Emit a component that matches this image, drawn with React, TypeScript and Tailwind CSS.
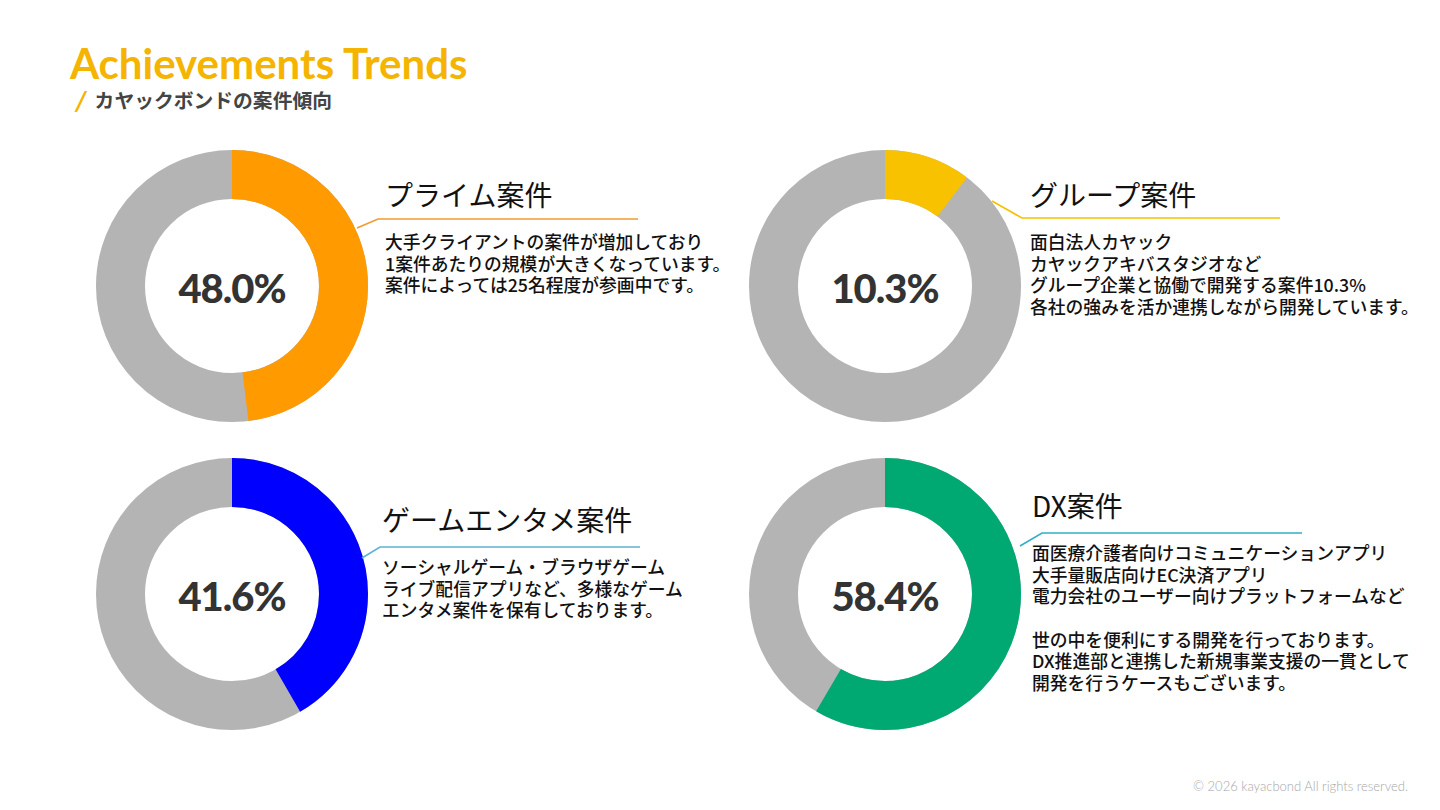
import React from 'react';

interface TrendProps {
  value: number;
  label: string;
  color: string;
  lineColor: string;
  title: string;
  lines: string[];
  textClass: string;
  leader: string;
}

const R = 111.5;
const C = 2 * Math.PI * R;

const Donut: React.FC<{ value: number; color: string; label: string }> = ({ value, color, label }) => (
  <div className="relative w-[272px] h-[272px] shrink-0">
    <svg width="272" height="272" viewBox="0 0 272 272">
      <circle cx="136" cy="136" r={R} fill="none" stroke="#b4b4b4" strokeWidth="49" />
      <circle
        cx="136"
        cy="136"
        r={R}
        fill="none"
        stroke={color}
        strokeWidth="49"
        strokeDasharray={`${(C * value) / 100} ${C}`}
        transform="rotate(-90 136 136)"
      />
    </svg>
    <div className="absolute inset-0 flex items-center justify-center pt-[4px]">
      <span className="font-['Lato',sans-serif] font-black text-[40px] leading-[44px] tracking-[-1px] text-[#333333]">
        {label}
      </span>
    </div>
  </div>
);

const TrendCard: React.FC<TrendProps> = ({ value, label, color, lineColor, title, lines, textClass, leader }) => (
  <div className="relative flex h-[272px]">
    <Donut value={value} color={color} label={label} />
    <div className={`flex flex-col ${textClass}`}>
      <h3 className="text-[28px] leading-[36px] text-[#111111] whitespace-nowrap">{title}</h3>
      <div className="mt-[19px] text-[17.8px] leading-[21.7px] font-medium text-[#111111] whitespace-nowrap">
        {lines.map((line, i) => (
          <p key={i} className="h-[21.7px]">{line}</p>
        ))}
      </div>
    </div>
    {/* leader line from the ring to the caption */}
    <svg className="absolute left-0 top-0 pointer-events-none" width="600" height="272">
      <polyline points={leader} fill="none" stroke={lineColor} strokeWidth="1.6" />
    </svg>
  </div>
);

const App: React.FC = () => {
  const trends: TrendProps[] = [
    {
      value: 48.0,
      label: '48.0%',
      color: '#ff9a00',
      lineColor: '#f29a30',
      title: 'プライム案件',
      lines: ['大手クライアントの案件が増加しており', '1案件あたりの規模が大きくなっています。', '案件によっては25名程度が参画中です。'],
      textClass: 'ml-[17px] pt-[26px]',
      leader: '261,78 282,69 542,69'
    },
    {
      value: 10.3,
      label: '10.3%',
      color: '#f8c200',
      lineColor: '#f5c000',
      title: 'グループ案件',
      lines: ['面白法人カヤック', 'カヤックアキバスタジオなど', 'グループ企業と協働で開発する案件10.3%', '各社の強みを活か連携しながら開発しています。'],
      textClass: 'ml-[9px] pt-[26px]',
      leader: '243,51 273,68 531,68'
    },
    {
      value: 41.6,
      label: '41.6%',
      color: '#0000ff',
      lineColor: '#5cb3d6',
      title: 'ゲームエンタメ案件',
      lines: ['ソーシャルゲーム・ブラウザゲーム', 'ライブ配信アプリなど、多様なゲーム', 'エンタメ案件を保有しております。'],
      textClass: 'ml-[14px] pt-[43px]',
      leader: '266,100 284,89 544,89'
    },
    {
      value: 58.4,
      label: '58.4%',
      color: '#00a972',
      lineColor: '#30b0c4',
      title: 'DX案件',
      lines: [
        '面医療介護者向けコミュニケーションアプリ',
        '大手量販店向けEC決済アプリ',
        '電力会社のユーザー向けプラットフォームなど',
        '',
        '世の中を便利にする開発を行っております。',
        'DX推進部と連携した新規事業支援の一貫として',
        '開発を行うケースもございます。'
      ],
      textClass: 'ml-[11px] pt-[29px]',
      leader: '271,88 293,75 553,75'
    }
  ];

  return (
    <div className="relative w-[1440px] h-[810px] overflow-hidden bg-white flex flex-col font-['Noto_Sans_CJK_JP','Noto_Sans',sans-serif]">
      <header className="pl-[70px] pt-[40px]">
        <h1 className="font-['Lato','Noto_Sans_CJK_JP',sans-serif] font-bold text-[42px] leading-[46px] text-[#f4b400]">
          Achievements Trends
        </h1>
        <div className="flex items-center pl-[5px] mt-[1px]">
          <span className="font-['Lato',sans-serif] font-bold text-[27px] leading-[26px] text-[#f4b400] italic">/</span>
          <span className="ml-[8px] font-bold text-[19.8px] leading-[26px] text-[#444444]">カヤックボンドの案件傾向</span>
        </div>
      </header>

      <div className="grid grid-cols-[653px_1fr] gap-y-[36px] pl-[96px] mt-[37px]">
        {trends.map((t) => (
          <TrendCard key={t.title} {...t} />
        ))}
      </div>

      <footer className="mt-auto pr-[32px] pb-[14px] text-right font-['Lato',sans-serif] font-light text-[13px] text-[#a8a8a8]">
        © 2026 kayacbond All rights reserved.
      </footer>
    </div>
  );
};

export default App;
